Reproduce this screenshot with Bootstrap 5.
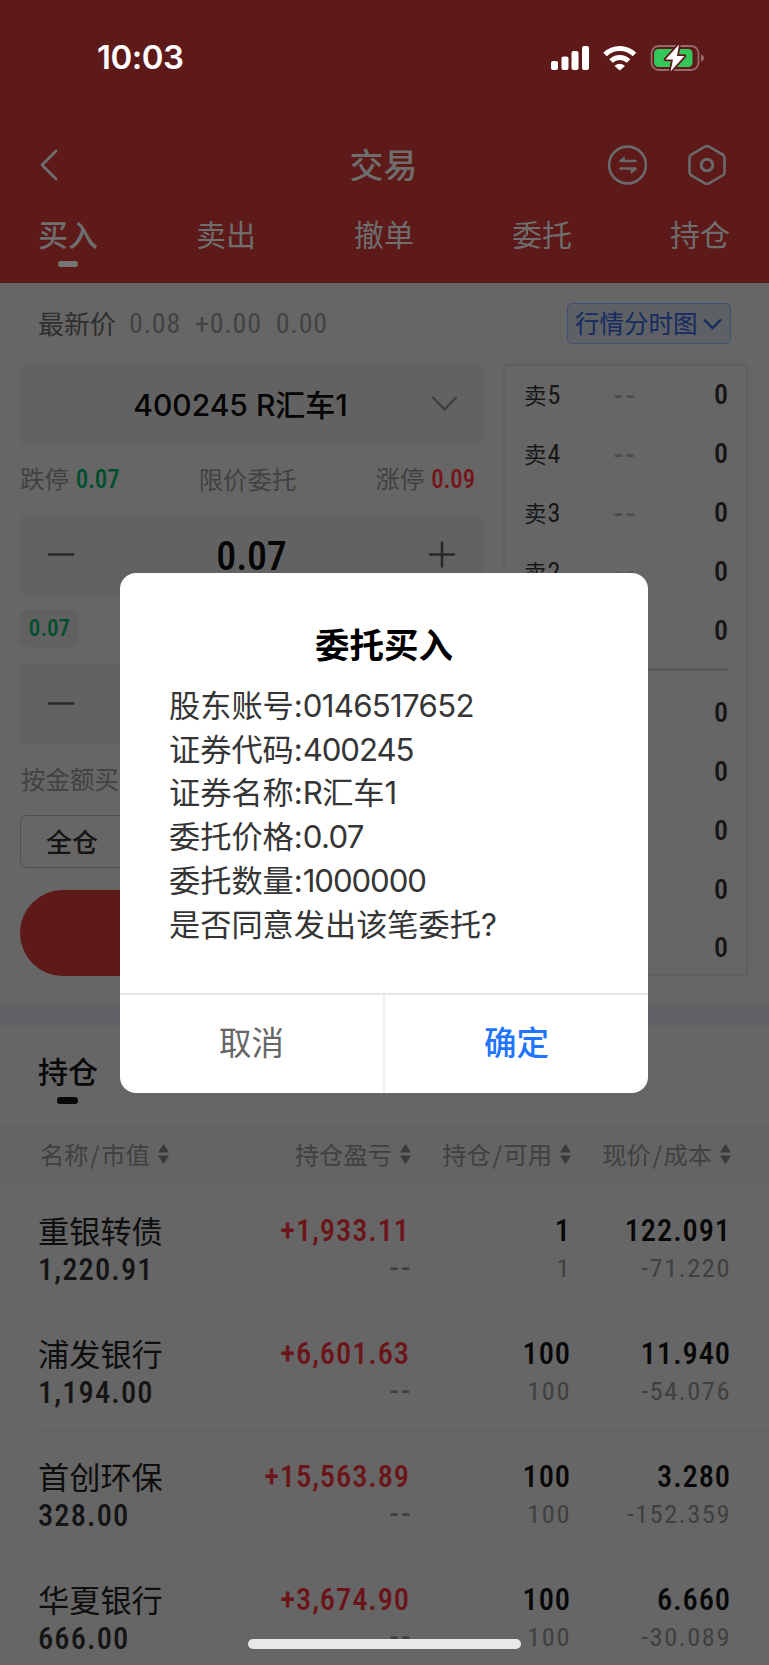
<!DOCTYPE html>
<html lang="zh-CN">
<head>
<meta charset="utf-8">
<meta name="viewport" content="width=device-width, initial-scale=1">
<title>交易</title>
<link href="https://cdn.jsdelivr.net/npm/bootstrap@5.3.0/dist/css/bootstrap.min.css" rel="stylesheet">
<style>
body{background:#666;color:#111;font-family:Inter,"Noto Sans CJK SC",sans-serif;width:769px;height:1665px;overflow:hidden;position:relative;line-height:1}
.cn{font-family:"Noto Sans CJK SC",sans-serif}
.num{font-family:"Roboto Condensed",Roboto,"Noto Sans CJK SC",sans-serif;font-stretch:85%;white-space:nowrap}
svg{display:block;flex:none}
.top-area{background:#5e1919;height:283px;color:#6e6e6e}
.status{height:115px;padding:0 65px 0 97px}
.clock{font-family:Inter,sans-serif;font-size:33px;font-weight:600;color:#fff;letter-spacing:-.5px}
.title-bar{height:99px;padding:0 41px 0 40px}
.title-bar h1{font-size:34px;font-weight:500;margin:-1px 0 0 -1px}
.tabs-row{height:69px;padding:1px 39px 0 38px;font-size:30px}
.tab-item{position:relative;line-height:36px}
.tab-item.on{font-weight:500}
.tab-item.on::after,.hold-title::after{content:"";position:absolute;left:50%;bottom:-16px;width:20px;height:6px;margin-left:-10px;border-radius:3px;background:#777}
.quote{height:81px;padding:0 38px}
.quote .lab{font-size:26px;color:#2f2f2f;margin-top:-2px}
.quote .num{font-size:28px;color:#434343;letter-spacing:.8px}
.chart-btn{width:164px;height:41px;border:1px solid #414e78;border-radius:5px;background:#5d6065;color:#162b60;font-size:24.5px;padding:0 8px 0 7px}
.trade{height:641px;padding:0 21px 0 20px}
.form-side{width:463px}
.field{height:82px;background:#626262;border-radius:8px}
.field.pick{font-size:30px;font-weight:500;color:#040404;position:relative}
.field.pick svg{position:absolute;right:25px;top:31px}
.field.step{padding:0 27px}
.field.step .num{font-size:40px;font-weight:500;color:#050505;letter-spacing:-.2px;margin-top:4px}
.limits{height:68px;font-size:24.4px;color:#414141;padding-right:8px;padding-bottom:2px}
.limits .num{font-size:25px;font-weight:500;letter-spacing:-.2px;margin-left:7px}
.green{color:#004f2c}.red{color:#781419}
.chip{width:59px;height:37px;margin:14px 0 16px;border-radius:8px;background:#616161;font-size:23px;font-weight:500;letter-spacing:.1px}
.amount{height:70px;font-size:24.5px;color:#424242;padding:0 0 1px 1px}
.ratio{width:110px;height:53px;border:1px solid #505050;border-radius:7px;font-size:26px;font-weight:500;color:#141414;padding:0 0 2px 25px}
.buy-btn{height:86px;margin-top:22px;border-radius:43px;background:#5e1919}
.book{width:245px;height:612px;border:2px solid #606060;padding:0 18px 0 20px}
.book-row{height:58.9px;font-size:22.5px}
.book-row .c1{width:90px;color:#171717;margin-left:-1px}
.book-row .c1 .num{font-size:26px;margin-left:1px}
.book-row .c2{color:#4c4c4c;font-size:35px;flex:1;letter-spacing:3px}
.book-row .c3{font-size:28px;font-weight:500;color:#151515}
.book-line{height:3px;background:#575757;margin:8px 0 12px}
.band{height:21px;background:#606265}
.hold-head{height:98px;padding:26px 38px 0}
.hold-title{position:relative;font-size:30px;font-weight:500;color:#080808;line-height:36px}
.hold-title::after{background:#080808;height:7px;width:21px;bottom:-16px;margin-left:-11px}
.grid-row{display:grid;grid-template-columns:172px 1fr 160px 160px}
.tbl-head{height:61px;background:#646464;padding:0 38px 0 40px;font-size:24.3px;color:#404040;align-items:center}
.tbl-head>div{display:flex;align-items:center;justify-content:flex-end;gap:8px;white-space:nowrap}
.tbl-head>div:first-child{justify-content:flex-start}
.tbl-head i{font-style:normal;margin:0 1.5px}
.hold-row{height:123px;margin-left:37px;padding:26px 39px 0 1px;border-bottom:1px solid #606060}
#rows{padding-top:1px}
.hold-row>div{text-align:right}
.hold-row>div:first-child{text-align:left}
.hold-row .nm{font-size:31.2px;line-height:40px;color:#0e0e0e;margin:-2px 0 2px}
.hold-row .val{font-size:30.5px;line-height:36px;color:#151515;font-weight:500;letter-spacing:1.1px}
.hold-row .big{font-size:30.5px;line-height:38px;font-weight:500;color:#070707;letter-spacing:.9px}
.hold-row .big.red{color:#6b1519}
.hold-row .sub{font-size:26.500px;line-height:36px;color:#404040;letter-spacing:1.5px}
.hold-row .sub.dash{font-size:35px;letter-spacing:3px;margin-right:-3px}
.hold-row>div:nth-child(n+3){margin-right:-1px}
.dialog-card{position:absolute;left:120px;top:573px;width:528px;height:520px;border-radius:16px;background:#fff}
.dialog-card h2{font-size:34.5px;font-weight:700;color:#000;margin:0;padding:48px 0 4px;line-height:44px}
.dialog-text{padding:16px 0 0 49px;font-size:31.2px;line-height:43.7px;color:#353535;height:324px}
.dialog-text .ltn{letter-spacing:-.7px}
.dialog-text .tight{letter-spacing:-1.1px}
.dialog-foot{border-top:2px solid #e6e6e6;height:100px;font-size:32.500px}
.dialog-foot button{border:0;background:none;flex:1;padding:0 0 5px}
.dialog-foot .no{color:#666;border-right:2px solid #f1f1f1}
.dialog-foot .yes{color:#1f75ff;font-weight:500}
.home-bar{position:absolute;left:248px;top:1639px;width:273px;height:10px;border-radius:5px;background:#e8e8e8}
</style>
</head>
<body>
<header class="top-area cn">
  <div class="status d-flex align-items-center justify-content-between">
    <span class="clock">10:03</span>
    <svg width="154" height="28" viewBox="550 43 154 28">
      <g fill="#fff"><rect x="551" y="60" width="7" height="9" rx="2"/><rect x="561.500" y="55.500" width="7" height="13.500" rx="2"/><rect x="571.500" y="50" width="7" height="19" rx="2"/><rect x="582" y="45" width="7" height="24" rx="2"/></g>
      <g fill="none" stroke="#fff" stroke-width="5"><path d="M605 53.500a21 21 0 0 1 29.500 0"/><path d="M611 60a12.500 12.500 0 0 1 17.500 0"/></g>
      <path fill="#fff" d="M614.500 65q5-4.500 10.500 0l-5.200 4.500z"/>
      <rect x="651.500" y="45" width="47" height="24" rx="7.500" fill="none" stroke="#96696a" stroke-width="1.800"/>
      <path fill="#96696a" d="M701 53.500q3 1 3 3.500t-3 3.500z"/>
      <rect x="654" y="48" width="38.500" height="18" rx="4.500" fill="#34c759"/>
      <path fill="#fff" stroke="#5e1919" stroke-width="3.500" paint-order="stroke" stroke-linejoin="round" d="M679 43.500L665.500 58.500h7.500L670.500 70.500L684.500 55H677z"/>
    </svg>
  </div>
  <div class="title-bar d-flex align-items-center position-relative">
    <svg width="18" height="32" viewBox="0 0 18 32" fill="none" stroke="#707070" stroke-width="2.800" stroke-linecap="round" stroke-linejoin="round"><path d="M16 2L2 16l14 14"/></svg>
    <h1 class="position-absolute start-50 translate-middle-x">交易</h1>
    <div class="d-flex ms-auto" style="gap:39px">
      <svg width="40" height="42" viewBox="0 0 40 42" fill="none" stroke="#6a6a6a" stroke-width="2.600" stroke-linecap="round" stroke-linejoin="round"><circle cx="20.500" cy="21" r="18.400"/><path d="M13.500 17h15M13.500 24.500h15"/><path fill="#6a6a6a" stroke-width="1.600" d="M13.500 16.500l3.500-3v3zM28.500 25.500l-4 3.200v-3.200z"/></svg>
      <svg width="42" height="42" viewBox="0 0 42 42" fill="none" stroke="#6a6a6a" stroke-width="2.600" stroke-linejoin="round"><path d="M19 2.700q2-1.100 4 0l13.500 7.800q2 1.200 2 3.500v14q0 2.300-2 3.500L23 39.300q-2 1.100-4 0L5.500 31.500q-2-1.200-2-3.500V14q0-2.300 2-3.500z"/><circle cx="21" cy="21" r="5.800" stroke-width="3"/></svg>
    </div>
  </div>
  <nav class="tabs-row d-flex justify-content-between align-items-start">
    <span class="tab-item on">买入</span><span class="tab-item">卖出</span><span class="tab-item">撤单</span><span class="tab-item">委托</span><span class="tab-item">持仓</span>
  </nav>
</header>

<section class="quote d-flex align-items-center">
  <span class="lab cn">最新价</span>
  <span class="num" style="margin-left:13px">0.08</span><span class="num" style="margin-left:14px">+0.00</span><span class="num" style="margin-left:14px">0.00</span>
  <button class="chart-btn cn ms-auto d-flex align-items-center justify-content-between">行情分时图
    <svg width="19" height="12" viewBox="0 0 19 12" fill="none" stroke="#162b60" stroke-width="2.400" stroke-linecap="round"><path d="M1.500 2l8 8 8-8"/></svg></button>
</section>

<section class="trade d-flex justify-content-between">
  <div class="form-side">
    <div class="field pick d-flex align-items-center justify-content-center"><span style="margin-left:-22px">400245 R汇车1</span>
      <svg width="27" height="18" viewBox="0 0 27 18" fill="none" stroke="#3c3c3c" stroke-width="2" stroke-linecap="round"><path d="M2 2.500l11.500 12L25 2.500"/></svg></div>
    <div class="limits cn d-flex align-items-center justify-content-between">
      <span>跌停<span class="num green">0.07</span></span><span>限价委托</span><span>涨停<span class="num red">0.09</span></span>
    </div>
    <div class="field step d-flex align-items-center justify-content-between">
      <svg width="28" height="28" stroke="#292929" stroke-width="2.600" stroke-linecap="round"><path d="M2 13.500h24"/></svg>
      <span class="num">0.07</span>
      <svg width="28" height="28" stroke="#292929" stroke-width="2.600" stroke-linecap="round"><path d="M2 13.500h24M14 1.500v24"/></svg>
    </div>
    <div class="chip num green d-flex align-items-center justify-content-center">0.07</div>
    <div class="field step d-flex align-items-center">
      <svg width="28" height="28" stroke="#292929" stroke-width="2.600" stroke-linecap="round"><path d="M2 13.500h24"/></svg>
    </div>
    <div class="amount cn d-flex align-items-center">按金额买入</div>
    <div class="ratio cn d-flex align-items-center">全仓</div>
    <div class="buy-btn"></div>
  </div>
  <div class="book cn" id="book"></div>
</section>
<div class="band"></div>
<section>
  <div class="hold-head"><span class="hold-title cn d-inline-block">持仓</span></div>
  <div class="tbl-head grid-row cn" id="thead"></div>
  <div id="rows"></div>
</section>

<div class="dialog-card" role="dialog">
  <h2 class="cn text-center">委托买入</h2>
  <div class="dialog-text">
    <div>股东账号:<span class="ltn">0146517652</span></div><div>证券代码:<span class="ltn tight">400245</span></div><div>证券名称:<span class="ltn">R</span>汇车1</div><div>委托价格:<span class="ltn">0.07</span></div><div>委托数量:<span class="ltn tight">1000000</span></div><div>是否同意发出该笔委托?</div>
  </div>
  <div class="dialog-foot d-flex cn"><button class="no">取消</button><button class="yes">确定</button></div>
</div>
<div class="home-bar"></div>

<script>
const row=n=>`<div class="book-row d-flex align-items-center"><span class="c1">${n[0]}<span class="num">${n[1]}</span></span><span class="c2 num">--</span><span class="c3 num">0</span></div>`;
document.getElementById('book').innerHTML=['卖5','卖4','卖3','卖2','卖1'].map(row).join('')+'<div class="book-line"></div>'+['买1','买2','买3','买4','买5'].map(row).join('');
const sort='<svg width="11" height="20" fill="#3a3a3a"><path d="M5.500 0L11 8.500H0zM5.500 20L11 11.500H0z"/></svg>';
document.getElementById('thead').innerHTML=['名称/市值','持仓盈亏','持仓/可用','现价/成本'].map(t=>`<div><span>${t.replace('/','<i>/</i>')}</span>${sort}</div>`).join('');
const data=[['重银转债','1,220.91','+1,933.11','1','122.091','-71.220'],['浦发银行','1,194.00','+6,601.63','100','11.940','-54.076'],['首创环保','328.00','+15,563.89','100','3.280','-152.359'],['华夏银行','666.00','+3,674.90','100','6.660','-30.089']];
document.getElementById('rows').innerHTML=data.map(d=>`<div class="hold-row grid-row num"><div><div class="nm cn">${d[0]}</div><div class="val">${d[1]}</div></div><div><div class="big red">${d[2]}</div><div class="sub dash">--</div></div><div><div class="big">${d[3]}</div><div class="sub">${d[3]}</div></div><div><div class="big">${d[4]}</div><div class="sub">${d[5]}</div></div></div>`).join('');
</script>
<script src="https://cdn.jsdelivr.net/npm/bootstrap@5.3.0/dist/js/bootstrap.bundle.min.js"></script>
</body>
</html>
